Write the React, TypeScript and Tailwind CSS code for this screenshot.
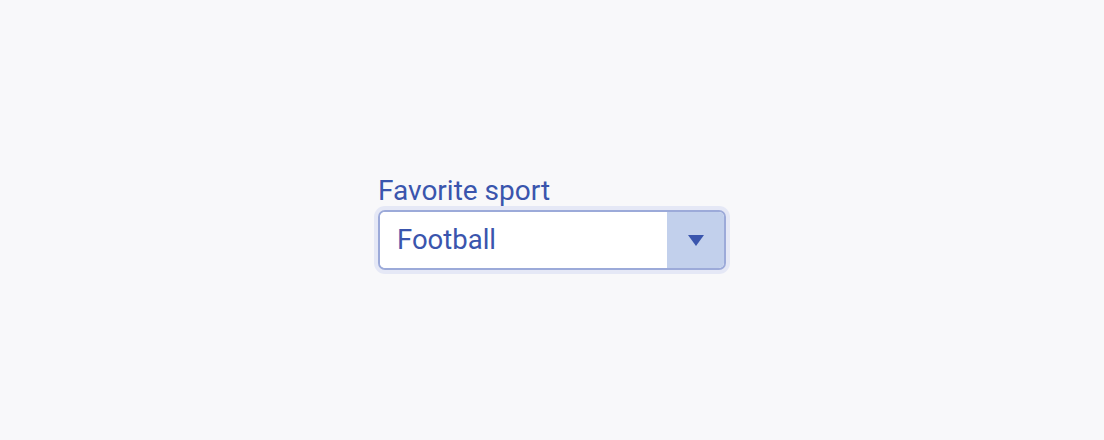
import React, { useState } from "react";

const sports = ["Football", "Basketball", "Tennis", "Hockey"];

export default function App() {
  const [sport, setSport] = useState("Football");

  return (
    <div className="min-h-screen bg-[#f8f8fa] flex items-center justify-center font-['Roboto',sans-serif]">
      <div className="flex flex-col w-[348px] mt-[4px]">
        <label className="text-[28px] leading-[33px] text-[#3a55ad] mb-[3px]">
          Favorite sport
        </label>
        <div className="relative flex h-[60px] rounded-[7px] border-2 border-[#9caad9] bg-white ring-4 ring-[#e5e8f6] overflow-hidden">
          <select
            value={sport}
            onChange={(e) => setSport(e.target.value)}
            className="appearance-none flex-1 bg-white pl-[17px] text-[27.5px] text-[#3a55ad] outline-none"
          >
            {sports.map((s) => (
              <option key={s} value={s}>
                {s}
              </option>
            ))}
          </select>
          <div className="w-[57px] bg-[#c2d0ec] flex items-center justify-center pointer-events-none">
            <svg width="16" height="11" viewBox="0 0 16 11">
              <path d="M0 0 H16 L8 11 Z" fill="#3a55ad" />
            </svg>
          </div>
        </div>
      </div>
    </div>
  );
}
